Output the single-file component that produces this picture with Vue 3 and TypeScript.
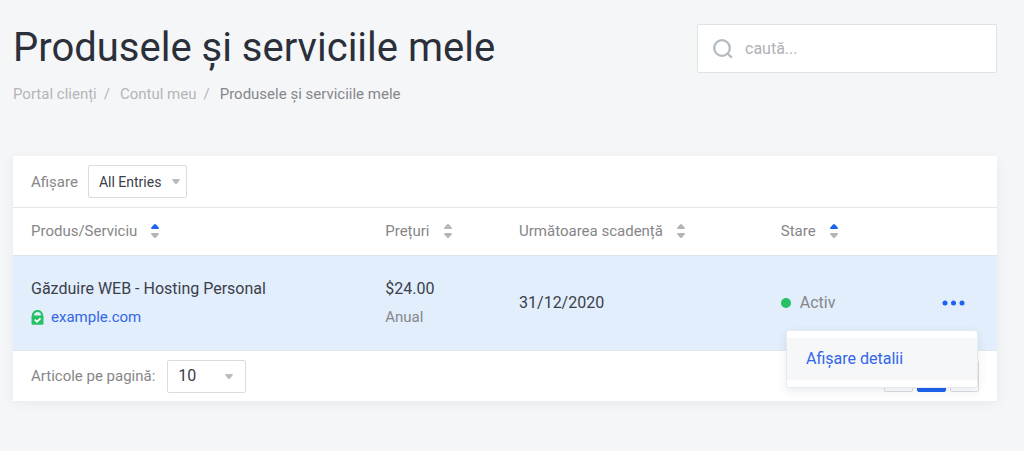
<script setup lang="ts">
import { ref } from 'vue'

type SortDirection = 'asc' | 'none'

interface Column {
  key: string
  label: string
  sort: SortDirection
}

interface Service {
  id: number
  name: string
  domain: string
  price: string
  cycle: string
  dueDate: string
  status: string
}

const columns: Column[] = [
  { key: 'product', label: 'Produs/Serviciu', sort: 'asc' },
  { key: 'price', label: 'Prețuri', sort: 'none' },
  { key: 'due', label: 'Următoarea scadență', sort: 'none' },
  { key: 'status', label: 'Stare', sort: 'asc' },
]

const services: Service[] = [
  {
    id: 1,
    name: 'Găzduire WEB - Hosting Personal',
    domain: 'example.com',
    price: '$24.00',
    cycle: 'Anual',
    dueDate: '31/12/2020',
    status: 'Activ',
  },
]

const search = ref('')
const filter = ref('All Entries')
const pageSize = ref('10')
const openMenu = ref<number | null>(1)

function toggleMenu(id: number): void {
  openMenu.value = openMenu.value === id ? null : id
}
</script>

<template>
  <main class="page">
    <header class="page-header">
      <div>
        <h1 class="title">Produsele și serviciile mele</h1>
        <nav class="breadcrumb" aria-label="Breadcrumb">
          <a href="#">Portal clienți</a>
          <span class="slash">/</span>
          <a href="#">Contul meu</a>
          <span class="slash">/</span>
          <span class="current">Produsele și serviciile mele</span>
        </nav>
      </div>
      <label class="search">
        <svg class="search-icon" viewBox="0 0 20 20" aria-hidden="true">
          <circle cx="9" cy="9" r="7.8" />
          <path d="M14.4 14.4 L18.8 18.8" />
        </svg>
        <input v-model="search" type="search" placeholder="caută..." aria-label="caută" />
      </label>
    </header>

    <section class="panel">
      <div class="toolbar">
        <label for="filter">Afișare</label>
        <span class="select filter-select">
          <select id="filter" v-model="filter">
            <option>All Entries</option>
          </select>
          <svg class="caret" viewBox="0 0 8 5" aria-hidden="true">
            <path d="M1 0H7Q8.4 0.4 7.5 1.5L5 4.4Q4 5.4 3 4.4L0.5 1.5Q-0.4 0.4 1 0Z" />
          </svg>
        </span>
      </div>

      <table class="services">
        <colgroup>
          <col class="col-product" />
          <col class="col-price" />
          <col class="col-due" />
          <col class="col-status" />
          <col class="col-actions" />
        </colgroup>
        <thead>
          <tr>
            <th v-for="column in columns" :key="column.key" scope="col">
              <button type="button" class="sort" :class="column.sort">
                {{ column.label }}
                <svg class="sort-icon" viewBox="0 0 8 14" aria-hidden="true">
                  <path class="up" d="M3 0.6Q4 -0.4 5 0.6L7.5 3.2Q8.5 4.6 7.2 5H0.8Q-0.5 4.6 0.5 3.2Z" />
                  <path class="down" d="M3 13.4Q4 14.4 5 13.4L7.5 10.8Q8.5 9.4 7.2 9H0.8Q-0.5 9.4 0.5 10.8Z" />
                </svg>
              </button>
            </th>
            <td></td>
          </tr>
        </thead>
        <tbody>
          <tr v-for="service in services" :key="service.id">
            <td>
              <div class="primary">{{ service.name }}</div>
              <div class="secondary domain">
                <svg class="lock" viewBox="0 0 13 15" aria-hidden="true">
                  <path class="shackle" d="M2 7V5.2a4.5 4.2 0 0 1 9 0V7" />
                  <rect x="0.5" y="5.4" width="12" height="9.4" rx="1.2" />
                  <path class="check" d="M3.8 9.6l2.2 2.1 3.5-3.4" />
                </svg>
                <a href="#">{{ service.domain }}</a>
              </div>
            </td>
            <td>
              <div class="primary">{{ service.price }}</div>
              <div class="secondary">{{ service.cycle }}</div>
            </td>
            <td class="date">{{ service.dueDate }}</td>
            <td><span class="status">{{ service.status }}</span></td>
            <td class="actions">
              <div class="menu-anchor">
                <button
                  type="button"
                  class="more"
                  aria-label="Acțiuni"
                  :aria-expanded="openMenu === service.id"
                  @click="toggleMenu(service.id)"
                >
                  <svg viewBox="0 0 23 6" aria-hidden="true">
                    <circle cx="3" cy="3" r="2.5" />
                    <circle cx="11.5" cy="3" r="2.5" />
                    <circle cx="20" cy="3" r="2.5" />
                  </svg>
                </button>
                <div v-if="openMenu === service.id" class="menu">
                  <a href="#">Afișare detalii</a>
                </div>
              </div>
            </td>
          </tr>
        </tbody>
      </table>

      <footer class="footer">
        <label for="page-size">Articole pe pagină:</label>
        <span class="select size-select">
          <select id="page-size" v-model="pageSize">
            <option>10</option>
          </select>
          <svg class="caret" viewBox="0 0 8 5" aria-hidden="true">
            <path d="M1 0H7Q8.4 0.4 7.5 1.5L5 4.4Q4 5.4 3 4.4L0.5 1.5Q-0.4 0.4 1 0Z" />
          </svg>
        </span>
        <nav class="pagination" aria-label="Pagination">
          <button type="button" aria-label="Previous"></button>
          <button type="button" class="active" aria-label="Page"></button>
          <button type="button" aria-label="Next"></button>
        </nav>
      </footer>
    </section>
  </main>
</template>

<style>
body {
  background: #f5f6f8;
}
</style>

<style scoped>
.page {
  padding: 24px 27px 48px 13px;
  color: #868689;
  font: 15px/24px Roboto, sans-serif;
}

.page * {
  box-sizing: border-box;
}

a {
  color: #3366e8;
  text-decoration: none;
}

button,
input,
select {
  font: inherit;
}

button {
  cursor: pointer;
}

.page-header {
  display: flex;
  justify-content: space-between;
  align-items: flex-start;
  gap: 24px;
}

.title {
  margin: 0;
  color: #2a2f3a;
  font-size: 40px;
  font-weight: 400;
  line-height: 48px;
}

.breadcrumb {
  display: flex;
  margin-top: 10px;
}

.breadcrumb a,
.slash {
  color: #b3b5ba;
}

.slash {
  margin: 0 10px 0 7px;
}

.current {
  color: #85868b;
}

.search {
  display: flex;
  align-items: center;
  gap: 12px;
  width: 300px;
  height: 49px;
  padding: 0 15px;
  border: 1px solid #dfe3e6;
  border-radius: 2px;
  background: #fff;
  font-size: 16px;
}

.search-icon {
  flex: none;
  width: 20px;
  height: 20px;
  fill: none;
  stroke: #b4bcc2;
  stroke-width: 2.3;
}

.search input {
  flex: 1;
  min-width: 0;
  padding: 0;
  border: 0;
  outline: 0;
  background: none;
  color: #2f3542;
}

.search input::placeholder {
  color: #b0b2b6;
  opacity: 1;
}

.panel {
  margin-top: 50px;
  background: #fff;
  box-shadow: 0 2px 10px rgba(40, 60, 80, 0.07);
}

.toolbar,
.footer {
  display: flex;
  align-items: center;
  gap: 10px;
  padding: 9px 18px;
}

.toolbar {
  border-bottom: 1px solid #e3e6e9;
}

.footer {
  gap: 12px;
  padding-bottom: 8px;
}

.select {
  position: relative;
  display: block;
}

.select select {
  display: block;
  width: 100%;
  height: 33px;
  padding: 0 20px 0 10px;
  border: 1px solid #dadde0;
  border-radius: 2px;
  appearance: none;
  background: #fff;
  color: #3b404a;
}

.filter-select {
  width: 99px;
  font-size: 14px;
}

.size-select {
  width: 79px;
  font-size: 16px;
}

.caret {
  position: absolute;
  top: 14px;
  right: 7px;
  width: 8px;
  height: 5px;
  fill: #b9bbbe;
  pointer-events: none;
}

.size-select .caret {
  right: 13px;
}

.services {
  width: 100%;
  border-collapse: collapse;
  table-layout: fixed;
}

.col-product {
  width: 36%;
}

.col-price {
  width: 13.6%;
}

.col-due {
  width: 26.6%;
}

.col-status {
  width: 14%;
}

th,
td {
  padding: 0 0 0 18px;
  text-align: left;
  font-weight: 400;
}

thead tr {
  height: 47px;
}

tbody tr {
  height: 95px;
  border-top: 1px solid #dce4ec;
  border-bottom: 1px solid #e3e6e9;
  background: #e2eefc;
}

.sort {
  display: flex;
  align-items: center;
  gap: 14px;
  padding: 0;
  border: 0;
  background: none;
  color: inherit;
  white-space: nowrap;
}

.sort-icon {
  width: 8px;
  height: 14px;
  fill: #b3b5b8;
}

.asc .up {
  fill: #1d62f0;
}

.primary,
.date {
  color: #3b404a;
  font-size: 16px;
}

.primary,
.secondary {
  line-height: 29px;
}

.domain {
  display: flex;
  align-items: center;
  gap: 7px;
}

.lock {
  width: 13px;
  height: 15px;
  fill: #27c065;
}

.lock .shackle {
  fill: none;
  stroke: #27c065;
  stroke-width: 2.2;
}

.lock .check {
  fill: none;
  stroke: #fff;
  stroke-width: 1.7;
}

.status {
  display: flex;
  align-items: center;
  gap: 9px;
  font-size: 16px;
}

.status::before {
  width: 10px;
  height: 10px;
  border-radius: 50%;
  background: #27c065;
  content: '';
}

.actions {
  padding: 0 19px 0 0;
}

.menu-anchor {
  position: relative;
  display: flex;
  justify-content: flex-end;
}

.more {
  display: flex;
  align-items: center;
  height: 24px;
  padding: 0 13px;
  border: 0;
  background: none;
}

.more svg {
  width: 23px;
  height: 6px;
  fill: #1d62f0;
}

.menu {
  position: absolute;
  z-index: 1;
  top: 39px;
  right: 0;
  width: 192px;
  padding: 7px 0;
  border: 1px solid #e6eaee;
  border-radius: 3px;
  background: #fff;
  box-shadow: 0 3px 10px rgba(40, 60, 80, 0.1);
}

.menu a {
  display: block;
  padding: 0 19px;
  background: #f5f7f9;
  font-size: 16px;
  line-height: 42px;
}

.pagination {
  display: flex;
  gap: 4px;
  margin-left: auto;
}

.pagination button {
  width: 29px;
  height: 32px;
  padding: 0;
  border: 1px solid #dadde0;
  border-radius: 2px;
  background: #fff;
}

.pagination .active {
  border-color: #1d62f0;
  background: #1d62f0;
}
</style>
